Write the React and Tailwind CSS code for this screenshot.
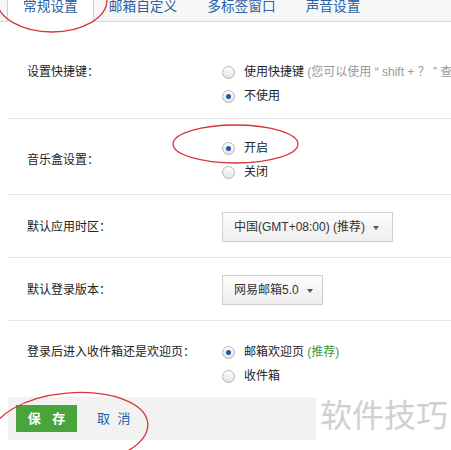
import React from "react";

const font = { fontFamily: '"Liberation Sans", "Noto Sans CJK SC", sans-serif' };

function Radio({ checked }) {
  return (
    <span className="relative inline-flex h-[13px] w-[13px] shrink-0 items-center justify-center rounded-full border border-[#b5b5b5] bg-gradient-to-b from-[#ffffff] to-[#e4e4e4]">
      {checked && <span className="h-[5px] w-[5px] rounded-full bg-[#1b5cab]" />}
    </span>
  );
}

function Option({ checked, children }) {
  return (
    <div className="flex h-6 items-center gap-[9px] text-[12px] text-[#222]">
      <Radio checked={checked} />
      <span className="whitespace-nowrap">{children}</span>
    </div>
  );
}

function Select({ label, width }) {
  return (
    <div
      className={`flex h-[30px] items-center gap-2 border border-[#cfcfcf] bg-gradient-to-b from-[#fdfdfd] to-[#eeeeee] pl-[11px] text-[12px] text-[#333] ${width}`}
    >
      <span className="whitespace-nowrap">{label}</span>
      <span className="mt-px h-0 w-0 border-x-[3px] border-t-[4px] border-x-transparent border-t-[#555]" />
    </div>
  );
}

export default function App() {
  const tabs = ["常规设置", "邮箱自定义", "多标签窗口", "声音设置"];

  return (
    <div className="relative h-[450px] w-[451px] overflow-hidden bg-white" style={font}>
      {/* Tabs */}
      <div className="flex h-[22px] border-b border-[#d8d8d8] bg-[#f7f7f7] pl-[7px]">
        {tabs.map((t, i) => (
          <div
            key={t}
            className={`flex h-[22px] items-start px-[15px] text-[13.7px] leading-[13px] whitespace-nowrap text-[#2b62a6] ${
              i === 0 ? "border-x border-[#cfcfcf] bg-white" : ""
            }`}
          >
            {t}
          </div>
        ))}
      </div>

      {/* Settings */}
      <div className="ml-2">
        <div className="flex border-b border-[#e6e6e6] pt-[38px] pb-[10px]">
          <div className="flex h-6 w-[214px] shrink-0 items-center pl-[19px] text-[12px] text-[#222]">
            设置快捷键：
          </div>
          <div>
            <Option>
              使用快捷键 <span className="text-[#999]">(您可以使用 “ shift + ？ ” 查看快捷键列表)</span>
            </Option>
            <Option checked>不使用</Option>
          </div>
        </div>

        <div className="flex border-b border-[#e6e6e6] pt-[17px] pb-[10px]">
          <div className="flex h-6 w-[214px] shrink-0 items-center self-center pl-[19px] text-[12px] text-[#222]">
            音乐盒设置：
          </div>
          <div>
            <Option checked>开启</Option>
            <Option>关闭</Option>
          </div>
        </div>

        <div className="flex items-center border-b border-[#e6e6e6] pt-[17px] pb-[15px]">
          <div className="w-[214px] shrink-0 pl-[19px] text-[12px] text-[#222]">默认应用时区：</div>
          <Select label="中国(GMT+08:00) (推荐)" width="w-[171px]" />
        </div>

        <div className="flex items-center border-b border-[#e6e6e6] pt-[17px] pb-[15px]">
          <div className="w-[214px] shrink-0 pl-[19px] text-[12px] text-[#222]">默认登录版本：</div>
          <Select label="网易邮箱5.0" width="w-[101px]" />
        </div>

        <div className="flex pt-[19px]">
          <div className="flex h-6 w-[214px] shrink-0 items-center pl-[19px] text-[12px] text-[#222]">
            登录后进入收件箱还是欢迎页：
          </div>
          <div>
            <Option checked>
              邮箱欢迎页 <span className="text-[#3d9a34]">(推荐)</span>
            </Option>
            <Option>收件箱</Option>
          </div>
        </div>

        {/* Footer */}
        <div className="mt-[9px] flex h-[43px] w-[308px] items-center gap-5 bg-[#f2f2f2] px-2">
          <button className="h-[27px] w-[61px] bg-[#4aa43c] pl-[4px] text-[13px] font-bold tracking-[4px] text-white">
            保 存
          </button>
          <button className="text-[13px] tracking-[2px] text-[#1f5fa8]">取 消</button>
        </div>
      </div>

      {/* Watermark */}
      <div className="absolute left-[320px] top-[396px] text-[32px] leading-[40px] whitespace-nowrap text-[#d0d0d0]">
        软件技巧
      </div>

      {/* Annotation ellipses */}
      <svg className="pointer-events-none absolute left-0 top-0" width="451" height="450">
        <g fill="none" stroke="#d8353a" strokeWidth="1.3">
          <ellipse cx="52" cy="0" rx="55" ry="32" />
          <ellipse cx="235.5" cy="144" rx="62.5" ry="19" />
          <ellipse cx="70" cy="430" rx="78" ry="37" transform="rotate(-5 70 430)" />
        </g>
      </svg>
    </div>
  );
}
